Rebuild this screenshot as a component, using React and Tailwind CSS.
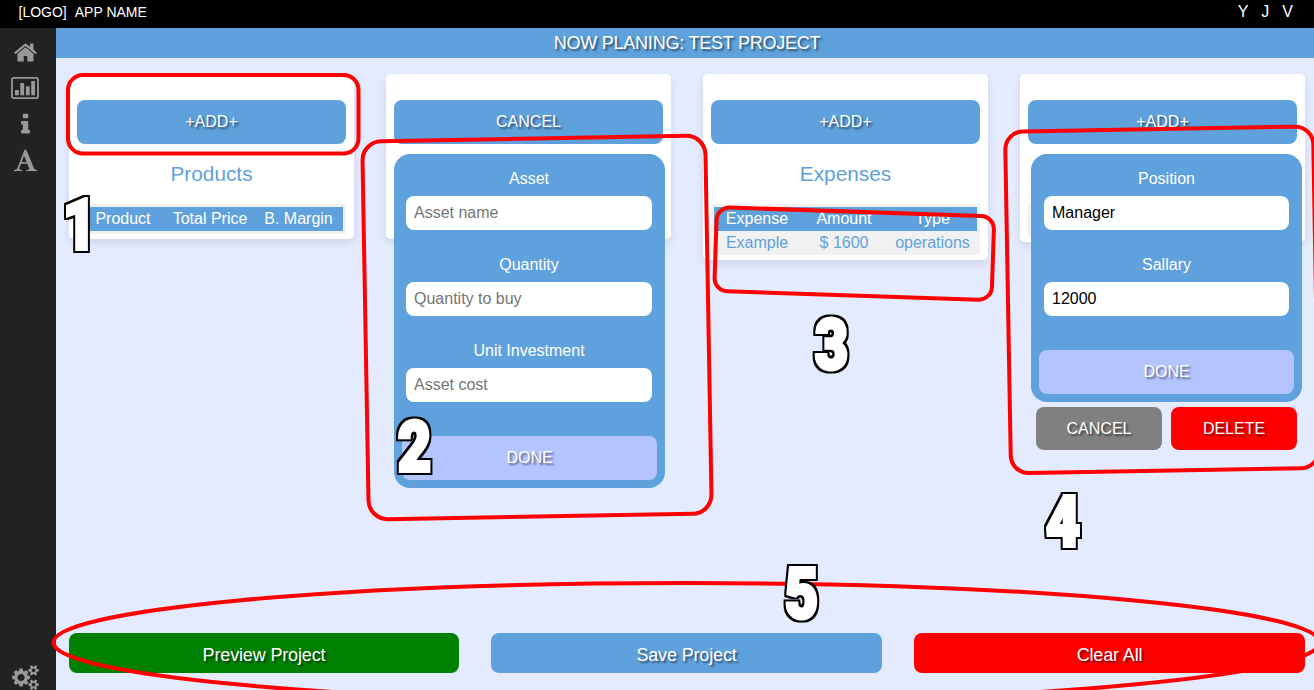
import React from "react";

const HOME =
  "M1472 992v480q0 26-19 45t-45 19h-384v-384h-256v384h-384q-26 0-45-19t-19-45v-480q0-1 .5-3t.5-3l575-474 575 474q1 2 1 6zm223-69l-62 74q-8 9-21 11h-3q-13 0-21-7l-692-577-692 577q-12 8-24 7-13-2-21-11l-62-74q-8-10-7-23.5t11-21.5l719-599q32-26 76-26t76 26l244 204v-195q0-14 9-23t23-9h192q14 0 23 9t9 23v408l219 182q10 8 11 21.5t-7 23.5z";
const INFO =
  "M1216 1344v128q0 26-19 45t-45 19h-512q-26 0-45-19t-19-45v-128q0-26 19-45t45-19h64v-384h-64q-26 0-45-19t-19-45v-128q0-26 19-45t45-19h384q26 0 45 19t19 45v576h64q26 0 45 19t19 45zm-128-1152v192q0 26-19 45t-45 19h-256q-26 0-45-19t-19-45v-192q0-26 19-45t45-19h256q26 0 45 19t19 45z";
const TYPEFACE =
  "M789 559l-170 450q33 0 136.5 2t160.5 2q19 0 57-2-87-253-184-452zm-725 1105l2-79q23-7 56-12.5t57-10.5 49.5-14.5 44.5-29 31-50.5l237-616 280-724h128q8 14 11 21l205 480q33 78 106 257.5t114 274.5q15 34 58 144.5t72 168.5q20 45 35 57 19 15 88 29.5t84 20.5q6 38 6 57 0 5-.5 13.5t-.5 12.5q-63 0-190-8t-191-8q-76 0-215 7t-178 8q0-43 4-78l131-28q1 0 12.5-2.5t15.5-3.5 14.5-4.5 15-6.5 11-8 9-11 2.5-14q0-16-31-96.5t-72-177.5-42-100l-450-2q-26 58-76.5 195.5t-50.5 162.5q0 22 14 37.5t43.5 24.5 48.5 13.5 57 8.5 41 4q1 19 1 58 0 9-2 27-58 0-174.5-10t-174.5-10q-8 0-26.5 4t-21.5 4q-80 14-188 14z";
const COGS =
  "M896 896q0-106-75-181t-181-75-181 75-75 181 75 181 181 75 181-75 75-181zm768 512q0-52-38-90t-90-38-90 38-38 90q0 53 37.5 90.5t90.5 37.5 90.5-37.5 37.5-90.5zm0-1024q0-52-38-90t-90-38-90 38-38 90q0 53 37.5 90.5t90.5 37.5 90.5-37.5 37.5-90.5zm-384 421v185q0 10-7 19.5t-16 10.5l-155 24q-11 35-32 76 34 48 90 115 7 11 7 20 0 12-7 19-23 30-82.5 89.5t-78.5 59.5q-11 0-21-7l-115-90q-37 19-77 31-11 108-23 155-7 24-30 24h-186q-11 0-20-7.5t-10-17.5l-23-153q-34-10-75-31l-118 89q-7 7-20 7-11 0-21-8-144-133-144-160 0-9 7-19 10-14 41-53t47-61q-23-44-35-82l-152-24q-10-1-17-9.5t-7-19.5v-185q0-10 7-19.5t16-10.5l155-24q11-35 32-76-34-48-90-115-7-11-7-20 0-12 7-20 22-30 82-89t79-59q11 0 21 7l115 90q34-18 77-32 11-108 23-154 7-24 30-24h186q11 0 20 7.5t10 17.5l23 153q34 10 75 31l118-89q8-7 20-7 11 0 21 8 144 133 144 160 0 8-7 19-12 16-42 54t-45 60q23 48 34 82l152 23q10 2 17 10.5t7 19.5zm640 533v140q0 16-149 31-12 27-30 52 51 113 51 138 0 4-4 7-122 71-124 71-8 0-46-47t-52-68q-20 2-30 2t-30-2q-14 21-52 68t-46 47q-2 0-124-71-4-3-4-7 0-25 51-138-18-25-30-52-149-15-149-31v-140q0-16 149-31 13-29 30-52-51-113-51-138 0-4 4-7 4-2 35-20t59-34 30-16q8 0 46 46.5t52 67.5q20-2 30-2t30 2q51-71 92-112l6-2q4 0 124 70 4 3 4 7 0 25-51 138 17 23 30 52 149 15 149 31zm0-1024v140q0 16-149 31-12 27-30 52 51 113 51 138 0 4-4 7-122 71-124 71-8 0-46-47t-52-68q-20 2-30 2t-30-2q-14 21-52 68t-46 47q-2 0-124-71-4-3-4-7 0-25 51-138-18-25-30-52-149-15-149-31v-140q0-16 149-31 13-29 30-52-51-113-51-138 0-4 4-7 4-2 35-20t59-34 30-16q8 0 46 46.5t52 67.5q20-2 30-2t30 2q51-71 92-112l6-2q4 0 124 70 4 3 4 7 0 25-51 138 17 23 30 52 149 15 149 31z";

function Icon({ path, viewBox = "0 0 1792 1792", className = "size-[25px]" }) {
  return (
    <svg viewBox={viewBox} className={className} fill="currentColor">
      <path d={path} />
    </svg>
  );
}

function ChartIcon() {
  return (
    <svg viewBox="0 0 28 22" className="h-[22px] w-7" fill="currentColor">
      <rect x="1" y="0.9" width="26" height="20.2" rx="1.6" fill="none" stroke="currentColor" strokeWidth="1.8" />
      <rect x="4" y="13" width="3.8" height="5.3" />
      <rect x="9.3" y="6" width="3.8" height="12.3" />
      <rect x="14.9" y="9.3" width="3.8" height="9" />
      <rect x="20.2" y="4" width="3.8" height="14.3" />
    </svg>
  );
}

const TEXT_SHADOW = "[text-shadow:2px_2px_2px_rgba(0,0,0,0.5)]";

function Button({ children, className }) {
  return (
    <button className={`flex items-center justify-center rounded-lg text-white ${TEXT_SHADOW} ${className}`}>
      {children}
    </button>
  );
}

function Card({ action, title, columns, row, className, children }) {
  return (
    <section
      className={`relative w-[285px] shrink-0 rounded-[5px] bg-white px-2 pt-[26px] shadow-[0_4px_8px_0_rgba(0,0,0,0.1)] ${className}`}
    >
      <Button className="h-11 w-full bg-[#5fa1dc]">{action}</Button>
      {title && <h2 className="mt-[14px] text-center text-[20.8px] leading-8 text-[#5fa1dc]">{title}</h2>}
      {columns && (
        <table className="mt-[14px] w-full border-separate border-spacing-0 border-[3px] border-[#f1f1f1] bg-[#f1f1f1] text-center">
          <thead>
            <tr className="h-6 bg-[#5fa1dc] leading-6 text-white">
              {columns.map(([name, width]) => (
                <th key={name} className={`p-0 font-normal ${width}`}>{name}</th>
              ))}
            </tr>
          </thead>
          {row && (
            <tbody>
              <tr className="h-[21px] leading-[18px] text-[#5fa1dc]">
                {row.map((cell) => (
                  <td key={cell} className="p-0 pt-[3px]">{cell}</td>
                ))}
              </tr>
            </tbody>
          )}
        </table>
      )}
      {children}
    </section>
  );
}

function Field({ label, ...input }) {
  return (
    <label className="flex h-[86px] flex-col">
      <span className="mb-[4px] text-center leading-[26px] text-white">{label}</span>
      <input
        {...input}
        readOnly
        className="h-[34px] w-full rounded-lg bg-white px-2 text-black outline-none placeholder:text-[#757575]"
      />
    </label>
  );
}

function Form({ fields, className = "", fieldsClassName }) {
  return (
    <div className={`w-[271px] rounded-2xl bg-[#5fa1dc] px-2 pt-3 pb-2 ${className}`}>
      <div className={fieldsClassName}>
        {fields.map((field) => (
          <Field key={field.label} {...field} />
        ))}
      </div>
      <Button className="mt-3 h-11 w-full bg-[#b3c4ff]">DONE</Button>
    </div>
  );
}

function Digit({ x, y, width, children }) {
  return (
    <text
      x={x}
      y={y}
      textLength={width}
      lengthAdjust="spacingAndGlyphs"
      fill="#fff"
      stroke="#fff"
      strokeWidth="4"
      strokeLinejoin="miter"
      filter="url(#outline)"
      className="font-['Roboto'] text-[70px] font-black"
    >
      {children}
    </text>
  );
}

function Annotations() {
  return (
    <svg viewBox="0 0 1314 690" className="pointer-events-none absolute inset-0 h-[690px] w-[1314px]">
      <defs>
        <filter id="outline" x="-30%" y="-20%" width="160%" height="140%" colorInterpolationFilters="sRGB">
          <feMorphology in="SourceAlpha" operator="dilate" radius="1.5" result="spread" />
          <feFlood floodColor="#000" />
          <feComposite in2="spread" operator="in" result="edge" />
          <feMerge>
            <feMergeNode in="edge" />
            <feMergeNode in="SourceGraphic" />
          </feMerge>
        </filter>
      </defs>
      <g fill="none" stroke="#f00" strokeWidth="4">
        <rect x="68" y="75" width="290.5" height="78.5" rx="15" />
        <rect x="365.5" y="138.5" width="343" height="378" rx="19" transform="rotate(-1 537 327.5)" />
        <rect x="715.5" y="211.7" width="277.5" height="83.8" rx="13" transform="rotate(1.9 854 253.6)" />
        <rect x="1008" y="129" width="308" height="341.7" rx="18" transform="rotate(-1 1162 299.8)" />
        <ellipse cx="686.5" cy="642.5" rx="633" ry="59.5" />
      </g>
      <Digit x="63" y="248.5" width="33">1</Digit>
      <Digit x="398" y="471" width="33">2</Digit>
      <Digit x="815" y="369" width="33">3</Digit>
      <Digit x="1046" y="545.5" width="34">4</Digit>
      <Digit x="785" y="618" width="33">5</Digit>
    </svg>
  );
}

export default function App() {
  return (
    <div className="relative flex h-[690px] w-[1314px] flex-col overflow-hidden bg-[#e5ebff] font-['Liberation_Sans',Arial,sans-serif] text-base">
      <header className="flex h-7 shrink-0 justify-between bg-black pr-[21px] pl-[18.5px] text-white">
        <div className="flex gap-2 text-[14px] leading-[25px]">
          <span>[LOGO]</span>
          <span>APP NAME</span>
        </div>
        <div className="flex gap-[13px] leading-[23px]">
          <span>Y</span>
          <span>J</span>
          <span>V</span>
        </div>
      </header>
      <div className="flex min-h-0 flex-1">
        <nav className="flex w-14 shrink-0 flex-col items-center bg-[#222] pr-[6px] text-[#999]">
          <div className="flex h-9 items-center pt-3"><Icon path={HOME} /></div>
          <div className="flex h-9 items-center pt-[12px]"><ChartIcon /></div>
          <div className="flex h-9 items-center pt-[12px]"><Icon path={INFO} /></div>
          <div className="flex h-9 items-center pt-[13px]"><Icon path={TYPEFACE} /></div>
          <div className="mt-auto h-[25px]"><Icon path={COGS} viewBox="0 0 1920 1792" className="h-[25px] w-[27px]" /></div>
        </nav>
        <main className="flex min-w-0 flex-1 flex-col">
          <h1 className={`h-[30px] shrink-0 bg-[#5fa1dc] pl-1 text-center text-[18px] leading-[30px] tracking-[-0.23px] text-white ${TEXT_SHADOW}`}>
            NOW PLANING: TEST PROJECT
          </h1>
          <div className="flex flex-1 items-start gap-8 pt-4 pl-[13px]">
            <Card
              action="+ADD+"
              title="Products"
              columns={[["Product", "w-[86px]"], ["Total Price", "w-[88px]"], ["B. Margin", "w-[89px]"]]}
              className="h-[165px]"
            />
            <Card action="CANCEL" className="h-[165px]">
              <Form
                className="absolute top-20 left-2"
                fieldsClassName="pl-1 pr-[5px]"
                fields={[
                  { label: "Asset", placeholder: "Asset name" },
                  { label: "Quantity", placeholder: "Quantity to buy" },
                  { label: "Unit Investment", placeholder: "Asset cost" },
                ]}
              />
            </Card>
            <Card
              action="+ADD+"
              title="Expenses"
              columns={[["Expense", "w-[86px]"], ["Amount", "w-[88px]"], ["Type", "w-[89px]"]]}
              row={["Example", "$ 1600", "operations"]}
              className="h-[186px]"
            />
            <Card action="+ADD+" className="h-[168px]">
              <div className="mt-[60px] h-[33px] bg-[#f1f1f1]" />
              <div className="absolute top-20 left-[11px]">
                <Form
                  fieldsClassName="px-[5px]"
                  fields={[
                    { label: "Position", defaultValue: "Manager" },
                    { label: "Sallary", defaultValue: "12000" },
                  ]}
                />
                <div className="mt-[5px] flex gap-[9px] pl-[5px]">
                  <Button className="h-[43px] w-[126px] bg-[#808080]">CANCEL</Button>
                  <Button className="h-[43px] w-[126px] bg-[#f00]">DELETE</Button>
                </div>
              </div>
            </Card>
          </div>
          <footer className="flex shrink-0 gap-8 pr-[9px] pb-[17px] pl-[13px] text-[18px] tracking-[-0.15px]">
            <Button className="h-10 w-[390px] bg-[#008000] pt-1">Preview Project</Button>
            <Button className="h-10 flex-1 bg-[#5fa1dc] pt-1">Save Project</Button>
            <Button className="h-10 flex-1 bg-[#f00] pt-1">Clear All</Button>
          </footer>
        </main>
      </div>
      <Annotations />
    </div>
  );
}
